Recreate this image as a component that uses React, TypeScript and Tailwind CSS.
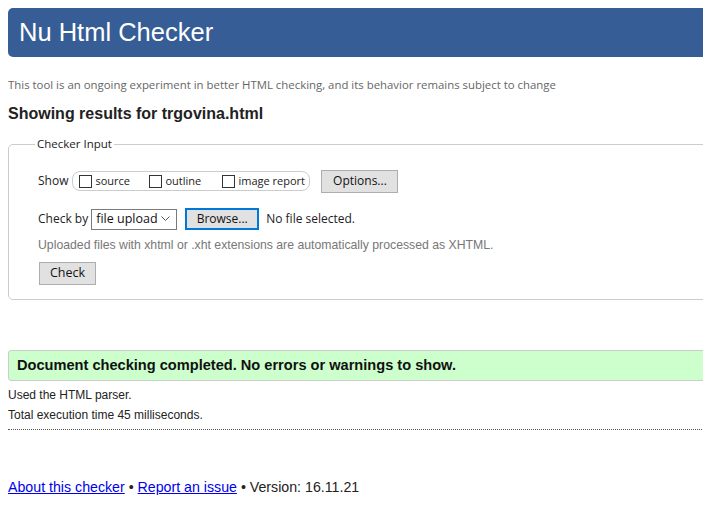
import React from "react";

const seg = { fontFamily: '"Open Sans", "Noto Sans", sans-serif' };

function Box() {
  return <span className="inline-block w-[13px] h-[13px] border border-[#333] bg-white mr-[3px]" />;
}

export default function App() {
  return (
    <div className="w-[703px] h-[514px] overflow-hidden bg-white text-[#222]" style={{ fontFamily: '"Liberation Sans", Arial, sans-serif' }}>
      <div className="w-[760px] pl-2 pt-2">
        <div className="h-[49px] bg-[#365d95] rounded-[5px] flex items-center pl-[11px]">
          <h1 className="text-white text-[25.5px] leading-none">Nu Html Checker</h1>
        </div>
        <p className="mt-[20px] text-[11.4px] text-[#666] leading-[16px]" style={seg}>
          This tool is an ongoing experiment in better HTML checking, and its behavior remains subject to change
        </p>
        <h2 className="mt-[12px] text-[16px] font-bold leading-[18px]">Showing results for trgovina.html</h2>
        <div className="relative mt-[21px] h-[156px] border border-[#ccc] rounded-[5px]">
          <span className="absolute left-[26px] top-[-9px] bg-white px-[2px] text-[11.5px] leading-[16px] text-[#222]" style={seg}>
            Checker Input
          </span>
          <div className="pl-[29px] pt-[24px] text-[12px]" style={seg}>
            <div className="flex items-center h-[24px]">
              <span className="text-[12px]">Show</span>
              <div className="ml-[4px] h-[20px] w-[238px] border border-[#ccc] rounded-[8px] flex items-center pl-[6px] text-[11px]">
                <span className="flex items-center w-[70px]"><Box />source</span>
                <span className="flex items-center w-[73px]"><Box />outline</span>
                <span className="flex items-center"><Box />image report</span>
              </div>
              <button className="ml-[11px] h-[23px] w-[77px] bg-[#e1e1e1] border border-[#adadad] text-[12px] text-[#111]" style={seg}>
                Options...
              </button>
            </div>
            <div className="flex items-center h-[22px] mt-[15px]">
              <span>Check by</span>
              <div className="ml-[3px] h-[21px] w-[86px] border border-[#7a7a7a] flex items-center justify-between pl-[4px] pr-[6px] text-[12.5px] text-[#111]">
                <span>file upload</span>
                <svg width="9" height="6" viewBox="0 0 9 6"><path d="M0.5 0.5 L4.5 4.5 L8.5 0.5" fill="none" stroke="#555" strokeWidth="1" /></svg>
              </div>
              <button className="ml-[8px] h-[22px] w-[74px] bg-[#e1e1e1] border-2 border-[#0078d7] text-[12px] text-[#111]" style={seg}>
                Browse...
              </button>
              <span className="ml-[7px] text-[12px]">No file selected.</span>
            </div>
            <p className="mt-[7px] text-[12.25px] text-[#777] leading-[16px]" style={{ fontFamily: '"Liberation Sans", Arial, sans-serif' }}>
              Uploaded files with xhtml or .xht extensions are automatically processed as XHTML.
            </p>
            <button className="mt-[9px] ml-[1px] h-[23px] w-[57px] bg-[#e1e1e1] border border-[#adadad] text-[12.5px] text-[#111]">
              Check
            </button>
          </div>
        </div>
        <div className="mt-[50px] h-[31px] bg-[#ccffcc] border border-[#ccc] rounded-l-[3px] flex items-center pl-[8px]">
          <span className="text-[14.6px] font-bold text-[#111]">Document checking completed. No errors or warnings to show.</span>
        </div>
        <p className="mt-[4px] text-[12px] leading-[20px]">Used the HTML parser.</p>
        <p className="text-[12px] leading-[20px]">Total execution time 45 milliseconds.</p>
        <div className="mt-[4px] border-t border-dotted border-[#555]" />
        <div className="mt-[48px] text-[14.2px] leading-[18px]">
          <a href="#" className="text-[#0000ee] underline">About this checker</a>
          <span> • </span>
          <a href="#" className="text-[#0000ee] underline">Report an issue</a>
          <span> • Version: 16.11.21</span>
        </div>
      </div>
    </div>
  );
}
